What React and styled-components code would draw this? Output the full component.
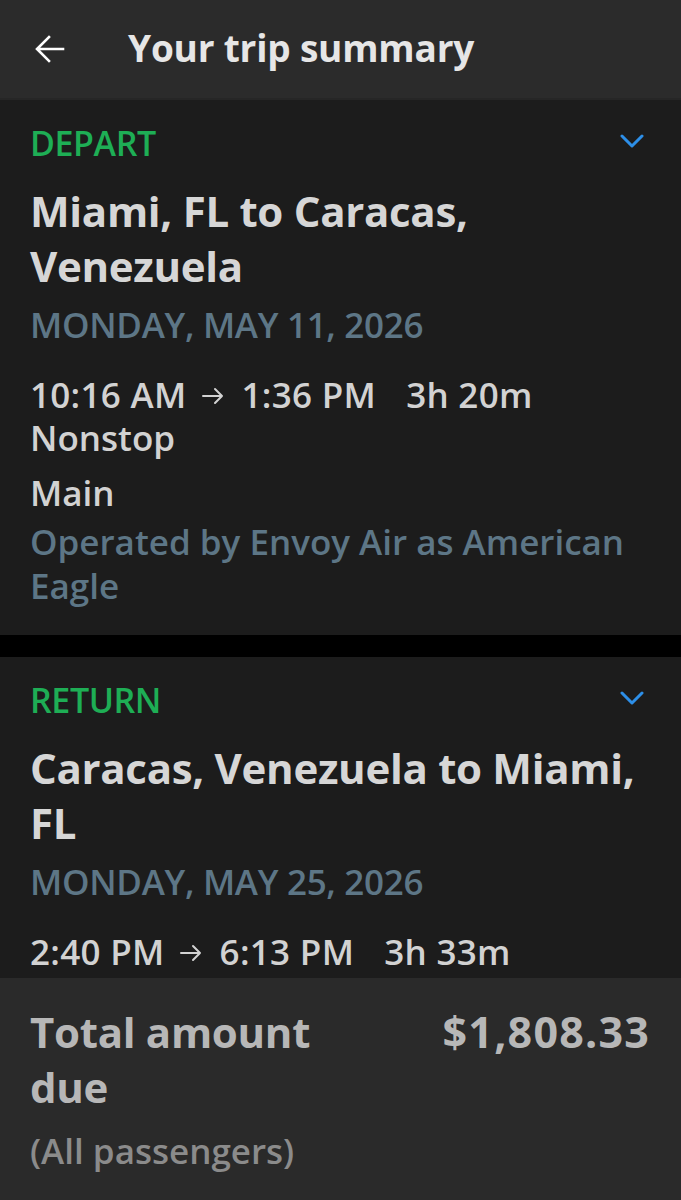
import React from "react";
import styled, { createGlobalStyle } from "styled-components";

const GlobalStyle = createGlobalStyle`
  html, body {
    margin: 0;
    padding: 0;
    background: #000;
  }
  body {
    font-family: "Open Sans", "Noto Sans", sans-serif;
  }
`;

const Screen = styled.div`
  width: 681px;
  height: 1200px;
  display: flex;
  flex-direction: column;
  background: #000;
  overflow: hidden;
`;

const Header = styled.div`
  height: 98px;
  flex-shrink: 0;
  display: flex;
  align-items: center;
  gap: 62px;
  padding: 0 0 0 34px;
  background: #2b2b2b;
  border-bottom: 2px solid #262626;
`;

const BackButton = styled.button`
  width: 32px;
  height: 32px;
  padding: 0;
  border: none;
  background: none;
  display: flex;
  align-items: center;
  justify-content: center;
`;

const HeaderTitle = styled.h1`
  margin: 0 0 4px;
  font-size: 37px;
  font-weight: 700;
  color: #e6e6e6;
  letter-spacing: -0.2px;
`;

const Content = styled.div`
  flex: 1;
  overflow: hidden;
  display: flex;
  flex-direction: column;
  gap: 22px;
`;

const Card = styled.section`
  background: #1c1c1c;
  padding: 23px 30px 27px 30px;
  flex-shrink: 0;
`;

const CardHead = styled.div`
  display: flex;
  justify-content: space-between;
  align-items: center;
`;

const Direction = styled.div`
  font-size: 34px;
  line-height: 40px;
  font-weight: 600;
  color: #1eae55;
  letter-spacing: -0.4px;
`;

const Chevron = styled.svg`
  margin-right: 7px;
  margin-top: -4px;
`;

const Route = styled.div`
  margin-top: 20px;
  font-size: 42px;
  line-height: 55px;
  font-weight: 700;
  color: #d6d6d6;
  letter-spacing: -0.3px;
`;

const DateLine = styled.div`
  margin-top: 10px;
  font-size: 35px;
  line-height: 44px;
  font-weight: 600;
  color: #5d7686;
  letter-spacing: -0.3px;
`;

const Times = styled.div`
  margin-top: 26px;
  display: flex;
  align-items: center;
  font-size: 35px;
  line-height: 43px;
  font-weight: 600;
  color: #d2d2d2;
  letter-spacing: 0.3px;
`;

const ArrowIcon = styled.svg`
  margin: 2px 18px 0 15px;
  flex-shrink: 0;
`;

const Duration = styled.span`
  margin-left: 30px;
`;

const Detail = styled.div`
  font-size: 35px;
  line-height: ${(p) => p.$lh || 43}px;
  margin-top: ${(p) => p.$mt || 0}px;
  font-weight: 600;
  color: ${(p) => (p.$muted ? "#5d7686" : "#d2d2d2")};
`;

const Footer = styled.div`
  height: 222px;
  flex-shrink: 0;
  background: #2a2a2a;
  padding: 26px 31px 0 30px;
  box-sizing: border-box;
`;

const TotalRow = styled.div`
  display: flex;
  justify-content: space-between;
  align-items: flex-start;
  gap: 20px;
`;

const TotalLabel = styled.div`
  max-width: 320px;
  font-size: 42px;
  line-height: 55px;
  font-weight: 700;
  color: #b7b7b7;
  letter-spacing: -0.3px;
`;

const TotalAmount = styled.div`
  font-size: 43px;
  line-height: 55px;
  font-weight: 700;
  color: #b7b7b7;
  letter-spacing: 1.2px;
`;

const Passengers = styled.div`
  margin-top: 15px;
  font-size: 35px;
  line-height: 44px;
  font-weight: 600;
  color: #8b8b8b;
`;

const BackIcon = () => (
  <svg width="32" height="32" viewBox="0 0 32 32" fill="none">
    <path
      d="M29 16H4M15 4L3 16l12 12"
      stroke="#fff"
      strokeWidth="2.6"
      strokeLinecap="square"
    />
  </svg>
);

const ChevronIcon = () => (
  <Chevron width="24" height="15" viewBox="0 0 24 15" fill="none">
    <path
      d="M2 2l10 10L22 2"
      stroke="#2d8fe8"
      strokeWidth="3"
      strokeLinecap="round"
      strokeLinejoin="round"
    />
  </Chevron>
);

const TimeArrow = () => (
  <ArrowIcon width="22" height="18" viewBox="0 0 22 18" fill="none">
    <path
      d="M1 9h19M13 2l7 7-7 7"
      stroke="#d2d2d2"
      strokeWidth="2"
      strokeLinecap="round"
      strokeLinejoin="round"
    />
  </ArrowIcon>
);

const TripCard = ({ direction, route, date, from, to, duration, children }) => (
  <Card>
    <CardHead>
      <Direction>{direction}</Direction>
      <ChevronIcon />
    </CardHead>
    <Route>{route}</Route>
    <DateLine>{date}</DateLine>
    <Times>
      <span>{from}</span>
      <TimeArrow />
      <span>{to}</span>
      <Duration>{duration}</Duration>
    </Times>
    {children}
  </Card>
);

const App = () => {
  return (
    <Screen>
      <GlobalStyle />
      <Header>
        <BackButton aria-label="Back">
          <BackIcon />
        </BackButton>
        <HeaderTitle>Your trip summary</HeaderTitle>
      </Header>
      <Content>
        <TripCard
          direction="DEPART"
          route="Miami, FL to Caracas, Venezuela"
          date="MONDAY, MAY 11, 2026"
          from="10:16 AM"
          to="1:36 PM"
          duration="3h 20m"
        >
          <Detail>Nonstop</Detail>
          <Detail $mt={12}>Main</Detail>
          <Detail $mt={6} $lh={44} $muted>
            Operated by Envoy Air as American Eagle
          </Detail>
        </TripCard>
        <TripCard
          direction="RETURN"
          route="Caracas, Venezuela to Miami, FL"
          date="MONDAY, MAY 25, 2026"
          from="2:40 PM"
          to="6:13 PM"
          duration="3h 33m"
        >
          <Detail>Nonstop</Detail>
          <Detail $mt={12}>Main</Detail>
        </TripCard>
      </Content>
      <Footer>
        <TotalRow>
          <TotalLabel>Total amount due</TotalLabel>
          <TotalAmount>$1,808.33</TotalAmount>
        </TotalRow>
        <Passengers>(All passengers)</Passengers>
      </Footer>
    </Screen>
  );
};

export default App;
